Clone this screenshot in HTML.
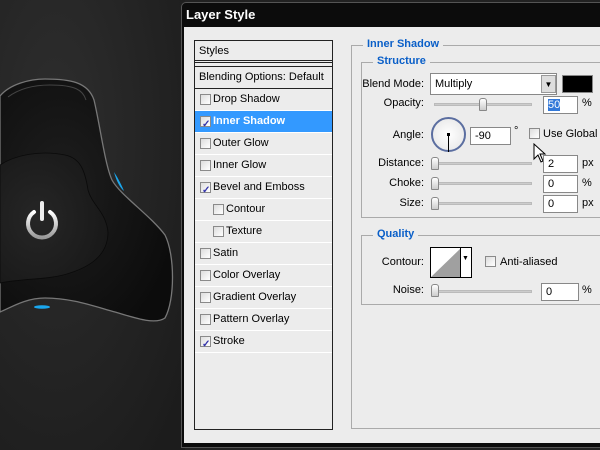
<!DOCTYPE html>
<html><head><meta charset="utf-8"><style>
*{margin:0;padding:0;box-sizing:border-box}
body{width:600px;height:450px;overflow:hidden;background:#222;font-family:"Liberation Sans",Arial,sans-serif;font-size:11px;color:#000;position:relative;white-space:nowrap}
.a{position:absolute}
.dlg{left:181px;top:2px;width:425px;height:446px;background:#0c0c0c;border-radius:5px 0 0 0;border:1px solid #555}
.title{left:186px;top:7px;color:#fff;font-weight:bold;font-size:13px}
.body{left:184px;top:27px;width:416px;height:416px;background:#ececec}
.list{left:194px;top:40px;width:139px;height:390px;border:1px solid #222;background:#ececec}
.row{position:absolute;left:0;width:137px;height:22px;border-bottom:1px solid #fff;line-height:21px;padding-left:18px}
.cb{position:absolute;width:11px;height:11px;border:1px solid #8a8a8a;background:linear-gradient(135deg,#ddd,#fff)}
.row .cb{left:5px;top:5px}
.chk::after{content:"✓";position:absolute;left:1px;top:-3px;font-size:10px;color:#33a;font-weight:bold}
.sel{background:#3399ff;color:#fff;font-weight:bold}
.lab{color:#0a5fc8;font-weight:bold;background:#ececec;padding:0 4px}
.gb{border:1px solid #aaa;border-right:none}
.inp{position:absolute;background:#fff;border:1px solid #888;height:18px;padding-left:4px;line-height:16px}
.track{position:absolute;height:3px;background:#ccc;border:1px solid #bbb}
.thumb{position:absolute;width:8px;height:13px;border:1px solid #888;border-radius:3px 3px 1px 1px;background:linear-gradient(#fff,#ccc)}
.r{position:absolute;text-align:right;width:80px}
</style></head><body>
<svg class="a" style="left:0;top:0" width="185" height="450">
<defs>
<radialGradient id="bg" cx="0.3" cy="0.3" r="0.9"><stop offset="0" stop-color="#2e2e2e"/><stop offset="1" stop-color="#1c1c1c"/></radialGradient>
<radialGradient id="sh" cx="0.35" cy="0.45" r="0.7"><stop offset="0" stop-color="#1e1e1e"/><stop offset="1" stop-color="#0c0c0c"/></radialGradient>
<radialGradient id="in" cx="0.35" cy="0.5" r="0.7"><stop offset="0" stop-color="#262626"/><stop offset="1" stop-color="#181818"/></radialGradient>
<linearGradient id="pw" x1="0" y1="0" x2="0" y2="1"><stop offset="0" stop-color="#fff"/><stop offset="1" stop-color="#999"/></linearGradient>
</defs>
<rect width="185" height="450" fill="url(#bg)"/>
<path d="M0,96 C10,84 30,79 45,79 C70,79 88,82 94,100 C100,125 105,165 112,180 C120,195 150,215 165,235 C175,255 175,300 165,318 C155,325 135,318 115,312 C90,305 70,298 45,298 C25,298 10,308 0,312 Z" fill="url(#sh)" stroke="#777" stroke-width="1.3"/>
<path d="M8,97 C20,88 35,85 50,85 C75,85 83,90 86,100" fill="none" stroke="#444" stroke-width="1"/>
<path d="M0,165 C15,155 40,150 65,155 C80,158 85,170 88,190 C92,205 106,212 108,232 C108,252 95,265 70,273 C50,280 25,278 0,283 Z" fill="url(#in)" stroke="#0a0a0a" stroke-width="0.8"/>
<path d="M114,172 C118,178 122,186 124,191 C120,188 116,180 114,172Z" fill="#1aa7ee"/>
<ellipse cx="42" cy="307" rx="8" ry="1.8" fill="#1aa7ee"/>
<path d="M34,212 A14,14 0 1 0 50,212" fill="none" stroke="url(#pw)" stroke-width="4" stroke-linecap="round"/>
<line x1="42" y1="203" x2="42" y2="219" stroke="#eee" stroke-width="4" stroke-linecap="round"/>
</svg>
<div class="a dlg"></div>
<div class="a title">Layer Style</div>
<div class="a body"></div>
<div class="a list">
<div class="row" style="top:0;padding-left:4px;height:22px;border-bottom:3px double #222">Styles</div>
<div class="row" style="top:25px;padding-left:4px;height:23px;border-bottom:1px solid #222;border-top:1px solid #222">Blending Options: Default</div>
<div class="row" style="top:48px"><span class="cb"></span>Drop Shadow</div>
<div class="row sel" style="top:70px"><span class="cb chk"></span>Inner Shadow</div>
<div class="row" style="top:92px"><span class="cb"></span>Outer Glow</div>
<div class="row" style="top:114px"><span class="cb"></span>Inner Glow</div>
<div class="row" style="top:136px"><span class="cb chk"></span>Bevel and Emboss</div>
<div class="row" style="top:158px;padding-left:31px"><span class="cb" style="left:18px"></span>Contour</div>
<div class="row" style="top:180px;padding-left:31px"><span class="cb" style="left:18px"></span>Texture</div>
<div class="row" style="top:202px"><span class="cb"></span>Satin</div>
<div class="row" style="top:224px"><span class="cb"></span>Color Overlay</div>
<div class="row" style="top:246px"><span class="cb"></span>Gradient Overlay</div>
<div class="row" style="top:268px"><span class="cb"></span>Pattern Overlay</div>
<div class="row" style="top:290px"><span class="cb chk"></span>Stroke</div>
</div>
<div class="a gb" style="left:351px;top:45px;width:260px;height:384px"></div>
<div class="a lab" style="left:363px;top:38px">Inner Shadow</div>
<div class="a gb" style="left:361px;top:62px;width:250px;height:156px"></div>
<div class="a lab" style="left:373px;top:55px">Structure</div>
<div class="r" style="left:344px;top:78px">Blend Mode:</div>
<div class="inp" style="left:430px;top:73px;width:127px;height:22px;line-height:20px">Multiply</div>
<div class="a" style="left:541px;top:75px;width:15px;height:18px;background:#ddd;border:1px solid #999;font-size:8px;text-align:center;line-height:17px">▼</div>
<div class="a" style="left:562px;top:75px;width:31px;height:18px;background:#000;border:1px solid #888"></div>
<div class="r" style="left:344px;top:97px">Opacity:</div>
<div class="track" style="left:434px;top:103px;width:98px"></div>
<div class="thumb" style="left:479px;top:98px"></div>
<div class="inp" style="left:543px;top:96px;width:35px"><span style="background:#3379d9;color:#fff">50</span></div>
<div class="a" style="left:582px;top:97px">%</div>
<div class="r" style="left:344px;top:129px">Angle:</div>
<div class="a" style="left:431px;top:117px;width:35px;height:35px;border-radius:50%;border:2px solid #5b6ea0;background:radial-gradient(#fff,#e4e4e4)"></div>
<div class="a" style="left:447px;top:133px;width:3px;height:3px;background:#000"></div>
<div class="a" style="left:448px;top:134px;width:1px;height:18px;background:#000"></div>
<div class="inp" style="left:470px;top:127px;width:41px">-90</div>
<div class="a" style="left:514px;top:125px">°</div>
<div class="cb a" style="left:529px;top:128px"></div>
<div class="a" style="left:543px;top:128px">Use Global Li</div>
<svg class="a" style="left:533px;top:143px" width="14" height="22"><path d="M1,1 L1,16 L5,12 L8,19 L10,18 L7,11 L12,11 Z" fill="#fff" stroke="#000" stroke-width="1"/></svg>
<div class="r" style="left:344px;top:157px">Distance:</div>
<div class="track" style="left:433px;top:162px;width:99px"></div>
<div class="thumb" style="left:431px;top:157px"></div>
<div class="inp" style="left:543px;top:155px;width:35px">2</div>
<div class="a" style="left:582px;top:157px">px</div>
<div class="r" style="left:344px;top:177px">Choke:</div>
<div class="track" style="left:433px;top:182px;width:99px"></div>
<div class="thumb" style="left:431px;top:177px"></div>
<div class="inp" style="left:543px;top:175px;width:35px">0</div>
<div class="a" style="left:582px;top:177px">%</div>
<div class="r" style="left:344px;top:197px">Size:</div>
<div class="track" style="left:433px;top:202px;width:99px"></div>
<div class="thumb" style="left:431px;top:197px"></div>
<div class="inp" style="left:543px;top:195px;width:35px">0</div>
<div class="a" style="left:582px;top:197px">px</div>
<div class="a gb" style="left:361px;top:235px;width:250px;height:70px"></div>
<div class="a lab" style="left:373px;top:228px">Quality</div>
<div class="r" style="left:344px;top:256px">Contour:</div>
<div class="a" style="left:430px;top:247px;width:42px;height:31px;border:1px solid #000;background:#fff"></div>
<svg class="a" style="left:431px;top:248px" width="30" height="29"><path d="M0,29 L30,0 L30,29 Z" fill="#a0a0a0"/></svg>
<div class="a" style="left:460px;top:247px;width:1px;height:31px;background:#000"></div>
<div class="a" style="left:462px;top:255px;font-size:7px">▼</div>
<div class="cb a" style="left:485px;top:256px"></div>
<div class="a" style="left:500px;top:256px">Anti-aliased</div>
<div class="r" style="left:344px;top:284px">Noise:</div>
<div class="track" style="left:433px;top:290px;width:99px"></div>
<div class="thumb" style="left:431px;top:284px"></div>
<div class="inp" style="left:541px;top:283px;width:38px">0</div>
<div class="a" style="left:582px;top:284px">%</div>
</body></html>
